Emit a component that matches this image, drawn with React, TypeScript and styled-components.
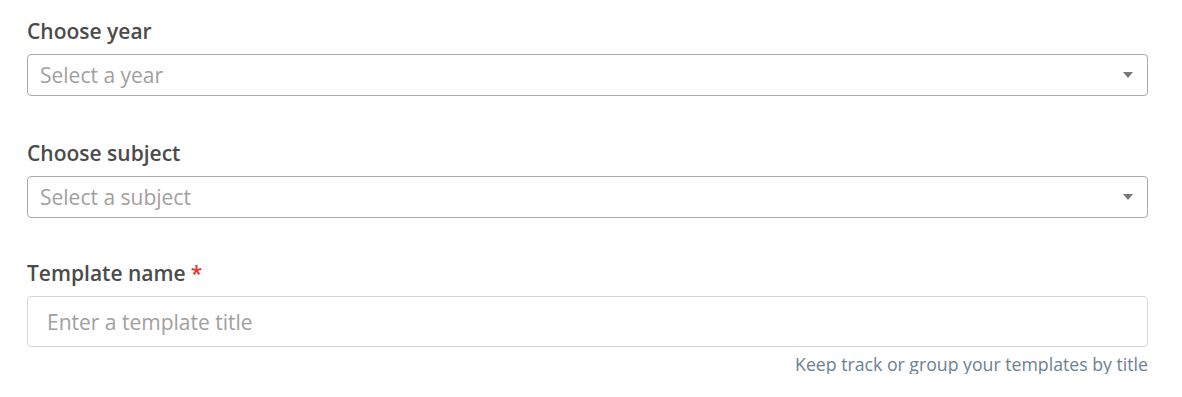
import React from 'react';
import styled, { createGlobalStyle } from 'styled-components';

const GlobalStyle = createGlobalStyle`
  body {
    margin: 0;
    background: #fff;
    font-family: 'Open Sans', 'Liberation Sans', sans-serif;
  }
`;

const Form = styled.div`
  width: 1121px;
  padding: 19px 0 0 27px;
  display: flex;
  flex-direction: column;
`;

const Field = styled.div<{ $gap?: number }>`
  display: flex;
  flex-direction: column;
  margin-bottom: ${(p) => (p.$gap != null ? p.$gap : 45)}px;
`;

const Label = styled.label`
  font-size: 21px;
  line-height: 24px;
  font-weight: 600;
  color: #4b4b4b;
  margin-bottom: 11px;
`;

const Required = styled.span`
  color: #e8362e;
  margin-left: 5px;
`;

const SelectBox = styled.div`
  height: 42px;
  box-sizing: border-box;
  border: 1px solid #a9a9a9;
  border-radius: 4px;
  display: flex;
  align-items: center;
  justify-content: space-between;
  padding: 0 14px 0 12px;
  font-size: 21px;
  color: #a0a0a0;
`;

const Caret = styled.span`
  width: 0;
  height: 0;
  border-left: 5px solid transparent;
  border-right: 5px solid transparent;
  border-top: 6px solid #777;
`;

const TextInput = styled.input`
  height: 51px;
  box-sizing: border-box;
  border: 1px solid #d6d6d6;
  border-radius: 4px;
  padding: 0 19px;
  font-family: inherit;
  font-size: 21px;
  color: #333;
  outline: none;
  &::placeholder {
    color: #a0a0a0;
  }
`;

const Hint = styled.div`
  align-self: flex-end;
  margin-top: 7px;
  font-size: 17.7px;
  line-height: 20px;
  color: #6a8293;
`;

const Select = ({ placeholder }: { placeholder: string }) => (
  <SelectBox>
    <span>{placeholder}</span>
    <Caret />
  </SelectBox>
);

export default function App() {
  return (
    <>
      <GlobalStyle />
      <Form>
        <Field>
          <Label>Choose year</Label>
          <Select placeholder="Select a year" />
        </Field>
        <Field $gap={43}>
          <Label>Choose subject</Label>
          <Select placeholder="Select a subject" />
        </Field>
        <Field $gap={0}>
          <Label>
            Template name<Required>*</Required>
          </Label>
          <TextInput placeholder="Enter a template title" />
          <Hint>Keep track or group your templates by title</Hint>
        </Field>
      </Form>
    </>
  );
}
